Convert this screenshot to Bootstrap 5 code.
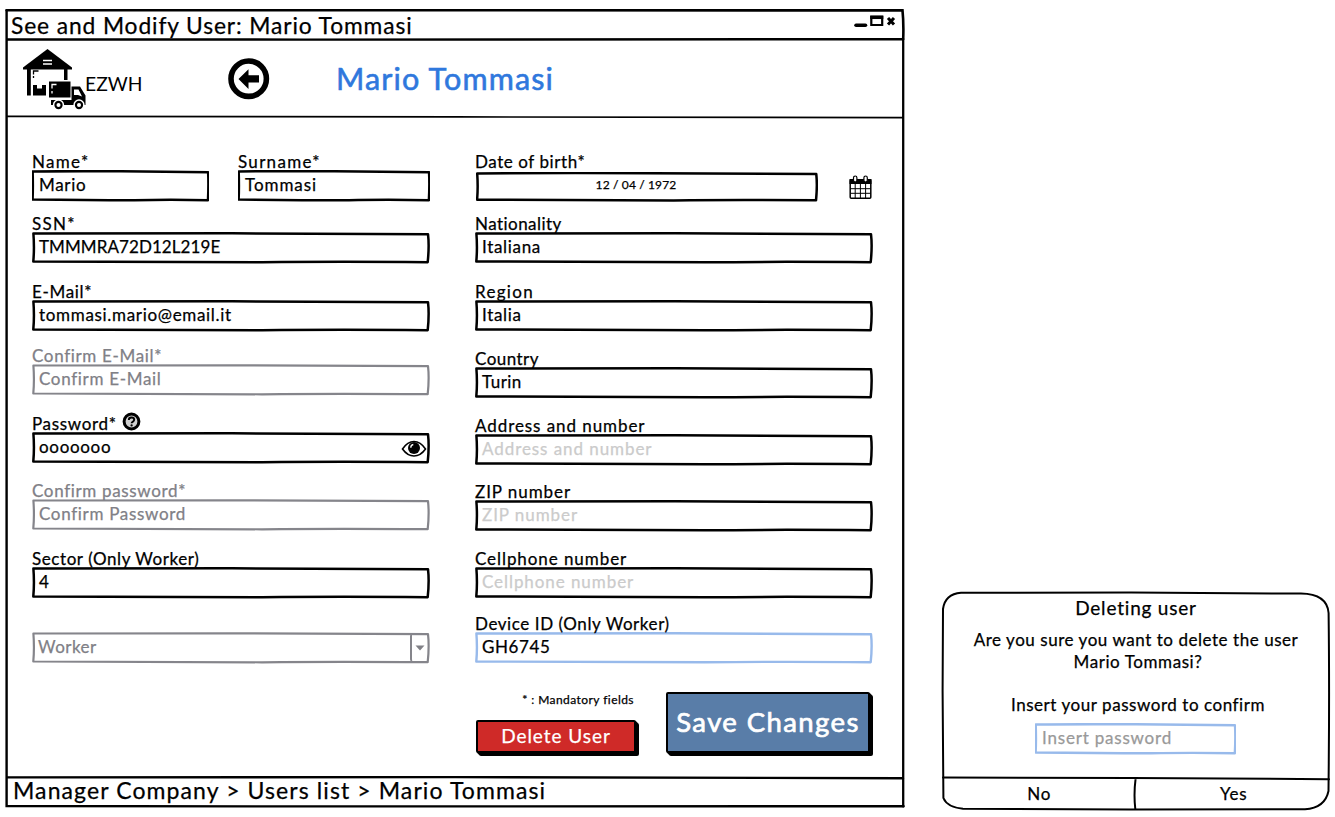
<!DOCTYPE html>
<html lang="en">
<head>
<meta charset="utf-8">
<meta name="viewport" content="width=device-width, initial-scale=1">
<title>See and Modify User</title>
<link href="https://cdn.jsdelivr.net/npm/bootstrap@5.3.0/dist/css/bootstrap.min.css" rel="stylesheet">
<script src="https://cdn.jsdelivr.net/npm/bootstrap@5.3.0/dist/js/bootstrap.bundle.min.js" defer></script>
<style>
body{background:#fff;color:#000;font-family:Lato,"Open Sans",sans-serif;font-size:17px;line-height:20px;width:1335px;height:817px;overflow:hidden;-webkit-text-stroke:.25px currentColor}
.win{width:900px;height:801px;margin:8px 0 0 5px;background:url("data:image/svg+xml,%3Csvg xmlns='http://www.w3.org/2000/svg' width='900' height='801'%3E%3Cg fill='none' stroke='black' stroke-linecap='round'%3E%3Cpath stroke-width='2.6' d='M1.6 2.2Q450 1.2 897.5 2.4Q898.8 15 898.2 31'/%3E%3Cpath stroke-width='2.3' d='M898.2 31V798.4'/%3E%3Cpath stroke-width='2.4' d='M1.6 2.2V798L300 798.4L898.6 798.2M2 31.2L300 31.6L898 31.2M2 769.4L450 769.1L898 770.2'/%3E%3Cpath stroke-width='1.7' d='M2 108.3L450 108.9L898 109.6'/%3E%3C/g%3E%3C/svg%3E")}
.titlebar{height:32px;padding:3px 8px 0 6px;font-size:22.8px;line-height:29px;letter-spacing:.88px}
.win-head{height:77px;padding-left:17px}
.win-head h1{font-size:30.5px;line-height:36px;color:#2f78dd;font-weight:400;letter-spacing:1.15px;margin:20px 0 0 66px;-webkit-text-stroke-width:.6px}
.brand-logo{margin-top:8px}
.brand-text{font-size:19.3px;line-height:24px;width:57px;margin:32px 0 0 -1px;-webkit-text-stroke-width:0}
.back{margin:18px 0 0 86px}
.win-main{height:661px;padding:33px 27px 0}
.win-foot{height:30px;padding:0 8px;font-size:23px;line-height:25px;letter-spacing:1.1px}
.col-l{width:398px}.col-r{width:398px;margin-left:45px}
.w-name{width:177px}.w-surname{width:192px}
.lbl{display:flex;height:20px;line-height:24px;white-space:nowrap;letter-spacing:.66px}
.lbl.wide{letter-spacing:1.3px}
.field{margin-top:16px}
.g10{margin-top:10px}.g12{margin-top:12px}.g13{margin-top:13px}.g14{margin-top:14px}.g15{margin-top:15px}.g33{margin-top:33px}
.box{height:32px;line-height:20px;letter-spacing:.68px;white-space:nowrap;padding:5px 3px 0 7px;background:url("data:image/svg+xml,%3Csvg xmlns='http://www.w3.org/2000/svg' viewBox='0 0 398 32' preserveAspectRatio='none'%3E%3Cpath vector-effect='non-scaling-stroke' fill='none' stroke='black' stroke-width='2.5' stroke-linejoin='round' d='M1.400 1.500Q80 1 200 1.300L396 2.200Q397.400 14 395.700 30.200Q300 29.500 230 30.300Q120 30.300 1.300 29.500Q2.500 16 1.400 1.500Z'/%3E%3C/svg%3E") 0 0/100% 100% no-repeat}
.box.mute{color:#808086;background-image:url("data:image/svg+xml,%3Csvg xmlns='http://www.w3.org/2000/svg' viewBox='0 0 398 32' preserveAspectRatio='none'%3E%3Cpath vector-effect='non-scaling-stroke' fill='none' stroke='%2385858b' stroke-width='2.2' stroke-linejoin='round' d='M1.400 1.500Q80 1 200 1.300L396 2.200Q397.400 14 395.700 30.200Q300 29.500 230 30.300Q120 30.300 1.300 29.500Q2.500 16 1.400 1.500Z'/%3E%3C/svg%3E")}
.box.focus{background-image:url("data:image/svg+xml,%3Csvg xmlns='http://www.w3.org/2000/svg' viewBox='0 0 398 32' preserveAspectRatio='none'%3E%3Cpath vector-effect='non-scaling-stroke' fill='none' stroke='%2398baeb' stroke-width='2.4' stroke-linejoin='round' d='M1.400 1.500Q80 1 200 1.300L396 2.200Q397.400 14 395.700 30.200Q300 29.500 230 30.300Q120 30.300 1.300 29.500Q2.500 16 1.400 1.500Z'/%3E%3C/svg%3E")}
.ph{color:#cbcbcb}.muted{color:#808086}
.datebox{width:342px;height:30px;margin:2px 0 0 1px;font-size:12px;padding:3px 22px 0 0;text-align:center;letter-spacing:.15px}
.cal{margin:5px 0 0 0}
.help{margin:0 0 0 5px}
.sel{padding-left:6px;letter-spacing:.5px}
.arrow{width:17px;height:28px;margin-top:-3px;border-left:2px solid #85858b;border-radius:2px 0 0 3px}
.note{font-size:12px;line-height:16px;margin:28px 2px 0 0;text-align:right;letter-spacing:.44px}
.sk-btn{border:2.5px solid #000;border-radius:2px;color:#fff;white-space:nowrap;text-align:center;box-shadow:1px 1px 0 #000,2px 2px 0 #000,3px 3px 0 #000}
.btn-del{width:160px;height:33px;background:#cf2a28;font-size:19px;line-height:28px;letter-spacing:.95px;margin:12px 0 0 1px}
.btn-save{width:204px;height:61px;background:#597da8;font-size:27.5px;line-height:56px;letter-spacing:1.4px;margin:28px 0 0 30px;-webkit-text-stroke-width:.7px}
.dlg{width:390px;height:220px;margin:591px 0 0 36px;background:url("data:image/svg+xml,%3Csvg xmlns='http://www.w3.org/2000/svg' width='390' height='220'%3E%3Cg fill='none' stroke='black' stroke-width='2' stroke-linecap='round'%3E%3Cpath d='M20 1.7L190 1.6L360 2.6Q386 3 387.6 22Q388.6 100 387.5 200Q384 217 364 218.2L190 218.6L22 217.8Q6 216 2.4 207L1.6 100L2 18Q4 3 20 1.7Z'/%3E%3Cpath d='M2 186.4L190 187L388 188.2M194.6 187.6Q192.6 203 194.3 218'/%3E%3C/g%3E%3C/svg%3E")}
.dlg-top{height:187px;text-align:center;letter-spacing:.55px;line-height:22px}
.dlg-title{font-size:19px;line-height:24px;padding-top:5px;letter-spacing:.8px}
.dlg-msg{margin-top:9px}
.dlg-ask{margin-top:21px;padding-left:4px}
.pwbox{width:201px;text-align:left;margin:7px 0 0 94px;color:#999;letter-spacing:.8px}
.dlg-act{height:33px;line-height:31px;text-align:center;letter-spacing:.8px;padding-left:1px}
/* letter spacing steps */
.ls-0{letter-spacing:.08px}.ls-5{letter-spacing:.45px}.ls-6{letter-spacing:.58px}.ls-9{letter-spacing:.93px}.ls-12{letter-spacing:.95px}
</style>
</head>
<body class="d-flex align-items-start">
<main class="win flex-shrink-0">
  <div class="titlebar d-flex justify-content-between">
    <span>See and Modify User: Mario Tommasi</span>
    <svg width="44" height="14" viewBox="0 0 44 14" class="mt-1"><path d="M3 10.300h9.500" stroke="#000" stroke-width="3.500" stroke-linecap="round"/><path d="M18.300 1.800h10.900v8.200H18.300z" fill="none" stroke="#000" stroke-width="2.200"/><path d="M17.200 2.300H30.300" stroke="#000" stroke-width="3.500"/><path d="M35 3l6 6.500M41 3l-6 6.500" stroke="#000" stroke-width="3"/></svg>
  </div>
  <header class="win-head d-flex">
    <svg width="64" height="62" viewBox="0 0 64 62" class="brand-logo flex-shrink-0"><path d="M1 19.500L25.500 1 50 19.500V21.500H1z"/><path d="M21 12.500h9M21 16h9" stroke="#fff" stroke-width="1.300"/><path d="M5 20h3.800v27.500H5zM42 20h3.500v12H42z"/><path d="M11.500 30v-7h5" fill="none" stroke="#000" stroke-width="1.300" stroke-dasharray="2 1.500 10"/><path d="M11 37h4v3.500h5V37h4v10.500H11z"/><path d="M27 33.500h21.500v16H27z"/><path d="M30 40.500v-4h4.500M30 43v2.500" fill="none" stroke="#fff" stroke-width="1.300"/><path d="M29 52h20.500V38.500h8.500l5.500 9V57H29z"/><path d="M52 41.500h4.500l3.500 7-4-1.500h-4z" fill="#fff"/><circle cx="36.500" cy="57" r="4.900" stroke="#fff" stroke-width="1.500"/><circle cx="57" cy="57" r="4.900" stroke="#fff" stroke-width="1.500"/><circle cx="36.500" cy="57" r="2" fill="#fff"/><circle cx="57" cy="57" r="2" fill="#fff"/></svg>
    <span class="brand-text">EZWH</span>
    <svg width="42" height="42" viewBox="0 0 42 42" class="back flex-shrink-0"><circle cx="20.700" cy="20.700" r="17.700" fill="none" stroke="#000" stroke-width="5.600"/><path d="M10.500 21l10-9.700v6H31v7.200H20.500V31z"/></svg>
    <h1>Mario Tommasi</h1>
  </header>
  <section class="win-main d-flex">
    <div class="col-l">
      <div class="d-flex justify-content-between">
        <div class="w-name"><span class="lbl wide">Name*</span><div class="box">Mario</div></div>
        <div class="w-surname"><span class="lbl wide">Surname*</span><div class="box ls-12">Tommasi</div></div>
      </div>
      <div class="field g10"><span class="lbl wide">SSN*</span><div class="box ls-0">TMMMRA72D12L219E</div></div>
      <div class="field"><span class="lbl">E-Mail*</span><div class="box">tommasi.mario@email.it</div></div>
      <div class="field g12"><span class="lbl muted">Confirm E-Mail*</span><div class="box mute">Confirm E-Mail</div></div>
      <div class="field"><span class="lbl">Password*<svg class="help" width="19" height="19" viewBox="0 0 19 19"><circle cx="9.500" cy="9.500" r="7.400" fill="#d0d0d0" stroke="#000" stroke-width="3"/><path d="M6.800 8Q6.800 5.500 9.500 5.500T12.200 7.800Q12.200 9 10.700 9.800Q9.600 10.400 9.600 11.300" fill="none" stroke="#000" stroke-width="1.900"/><circle cx="9.600" cy="13.400" r="1.150"/></svg></span>
        <div class="box d-flex justify-content-between"><span>ooooooo</span><svg width="26" height="20" viewBox="0 0 26 20"><path d="M1.500 12Q6.500 4.500 13 4.500T24.500 12Q19.500 19 13 19T1.500 12Z" fill="#fff" stroke="#000" stroke-width="1.600"/><circle cx="13" cy="11" r="6"/><path d="M9.800 10.700Q9.800 7.800 12.300 7.500" fill="none" stroke="#fff" stroke-width="1.300"/></svg></div></div>
      <div class="field g15"><span class="lbl muted">Confirm password*</span><div class="box mute">Confirm Password</div></div>
      <div class="field"><span class="lbl ls-6">Sector (Only Worker)</span><div class="box">4</div></div>
      <div class="g33"><div class="box mute sel d-flex justify-content-between"><span>Worker</span><span class="arrow d-flex align-items-center justify-content-center"><svg width="10" height="6" viewBox="0 0 10 6"><path d="M.5.500h9L5 5.500z" fill="#808086"/></svg></span></div></div>
    </div>
    <div class="col-r">
      <div><span class="lbl ls-6">Date of birth*</span><div class="d-flex justify-content-between"><div class="box datebox">12 / 04 / 1972</div>
        <svg class="cal" width="24" height="25" viewBox="0 0 24 25"><rect x="1.200" y="4.700" width="20.600" height="18.600" rx="1" fill="#fff" stroke="#000" stroke-width="1.500"/><path d="M.5 4h22v5H.5z"/><path d="M6.200 9v14M11.400 9v14M16.600 9v14M1.500 13.700h20M1.500 18.300h20" stroke="#000"/><rect x="4.500" y="1" width="3.400" height="6" rx="1.700" fill="#fff" stroke="#000" stroke-width="1.200"/><rect x="14.900" y="1" width="3.400" height="6" rx="1.700" fill="#fff" stroke="#000" stroke-width="1.200"/></svg></div></div>
      <div class="field g10"><span class="lbl ls-5">Nationality</span><div class="box">Italiana</div></div>
      <div class="field"><span class="lbl wide">Region</span><div class="box">Italia</div></div>
      <div class="field g15"><span class="lbl ls-5">Country</span><div class="box ls-5">Turin</div></div>
      <div class="field g15"><span class="lbl ls-9">Address and number</span><div class="box ph ls-9">Address and number</div></div>
      <div class="field g14"><span class="lbl ls-9">ZIP number</span><div class="box ph ls-9">ZIP number</div></div>
      <div class="field g15"><span class="lbl ls-9">Cellphone number</span><div class="box ph ls-9">Cellphone number</div></div>
      <div class="field g13"><span class="lbl ls-6">Device ID (Only Worker)</span><div class="box focus ls-6">GH6745</div></div>
      <div class="d-flex"><div><div class="note">* : Mandatory fields</div><div class="sk-btn btn-del">Delete User</div></div>
      <div class="sk-btn btn-save">Save Changes</div></div>
    </div>
  </section>
  <footer class="win-foot">Manager Company &gt; Users list &gt; Mario Tommasi</footer>
</main>
<aside class="dlg flex-shrink-0">
  <div class="dlg-top"><div class="dlg-title">Deleting user</div>
  <div class="dlg-msg">Are you sure you want to delete the user<br><span class="ls-6 ps-1">Mario Tommasi?</span></div>
  <div class="dlg-ask">Insert your password to confirm</div>
  <div class="box focus pwbox">Insert password</div></div>
  <div class="dlg-act row g-0"><div class="col-6">No</div><div class="col-6">Yes</div></div>
</aside>
</body>
</html>
